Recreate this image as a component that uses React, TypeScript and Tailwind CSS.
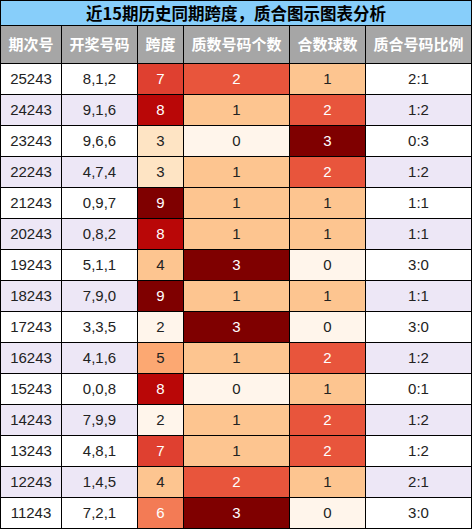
import React from 'react';

type Row = { issue: string; nums: string; span: number; prime: number; comp: number; ratio: string };

const rows: Row[] = [
  { issue: '25243', nums: '8,1,2', span: 7, prime: 2, comp: 1, ratio: '2:1' },
  { issue: '24243', nums: '9,1,6', span: 8, prime: 1, comp: 2, ratio: '1:2' },
  { issue: '23243', nums: '9,6,6', span: 3, prime: 0, comp: 3, ratio: '0:3' },
  { issue: '22243', nums: '4,7,4', span: 3, prime: 1, comp: 2, ratio: '1:2' },
  { issue: '21243', nums: '0,9,7', span: 9, prime: 1, comp: 1, ratio: '1:1' },
  { issue: '20243', nums: '0,8,2', span: 8, prime: 1, comp: 1, ratio: '1:1' },
  { issue: '19243', nums: '5,1,1', span: 4, prime: 3, comp: 0, ratio: '3:0' },
  { issue: '18243', nums: '7,9,0', span: 9, prime: 1, comp: 1, ratio: '1:1' },
  { issue: '17243', nums: '3,3,5', span: 2, prime: 3, comp: 0, ratio: '3:0' },
  { issue: '16243', nums: '4,1,6', span: 5, prime: 1, comp: 2, ratio: '1:2' },
  { issue: '15243', nums: '0,0,8', span: 8, prime: 0, comp: 1, ratio: '0:1' },
  { issue: '14243', nums: '7,9,9', span: 2, prime: 1, comp: 2, ratio: '1:2' },
  { issue: '13243', nums: '4,8,1', span: 7, prime: 1, comp: 2, ratio: '1:2' },
  { issue: '12243', nums: '1,4,5', span: 4, prime: 2, comp: 1, ratio: '2:1' },
  { issue: '11243', nums: '7,2,1', span: 6, prime: 3, comp: 0, ratio: '3:0' },
];

// 跨度颜色
const spanColor: Record<number, string> = {
  2: 'bg-[#fff5eb] text-[#222]',
  3: 'bg-[#fee4c4] text-[#222]',
  4: 'bg-[#fdc590] text-[#222]',
  5: 'bg-[#fca872] text-[#222]',
  6: 'bg-[#f37b55] text-white',
  7: 'bg-[#df4030] text-white',
  8: 'bg-[#b90707] text-white',
  9: 'bg-[#7f0000] text-white',
};

// 个数颜色
const countColor: Record<number, string> = {
  0: 'bg-[#fff5eb] text-[#222]',
  1: 'bg-[#fdc590] text-[#222]',
  2: 'bg-[#e8553c] text-white',
  3: 'bg-[#7f0000] text-white',
};

const headers = ['期次号', '开奖号码', '跨度', '质数号码个数', '合数球数', '质合号码比例'];

export default function App() {
  return (
    <div className="w-[472px] h-[529px] bg-white font-['Liberation_Sans','Noto_Sans_CJK_SC',sans-serif]">
      <div className="grid grid-cols-[60px_75px_45px_105px_75px_105px] gap-px bg-black p-px">
        <div className="col-span-6 h-[24px] bg-[#87cefa] flex items-center justify-center text-[16.5px] font-bold text-black font-['Noto_Sans_CJK_SC',sans-serif]">
          近15期历史同期跨度，质合图示图表分析
        </div>
        {headers.map((h) => (
          <div
            key={h}
            className="h-[37px] bg-[#a6a6a6] flex items-center justify-center text-[15px] font-bold text-white font-['Noto_Sans_CJK_SC',sans-serif]"
          >
            {h}
          </div>
        ))}
        {rows.map((r, i) => {
          const alt = i % 2 === 1 ? 'bg-[#ede7f6]' : 'bg-white';
          const cell = 'h-[30px] flex items-center justify-center text-[15px]';
          return (
            <React.Fragment key={r.issue}>
              <div className={`${cell} ${alt} text-[#222]`}>{r.issue}</div>
              <div className={`${cell} ${alt} text-[#222]`}>{r.nums}</div>
              <div className={`${cell} ${spanColor[r.span]}`}>{r.span}</div>
              <div className={`${cell} ${countColor[r.prime]}`}>{r.prime}</div>
              <div className={`${cell} ${countColor[r.comp]}`}>{r.comp}</div>
              <div className={`${cell} ${alt} text-[#222]`}>{r.ratio}</div>
            </React.Fragment>
          );
        })}
      </div>
    </div>
  );
}
